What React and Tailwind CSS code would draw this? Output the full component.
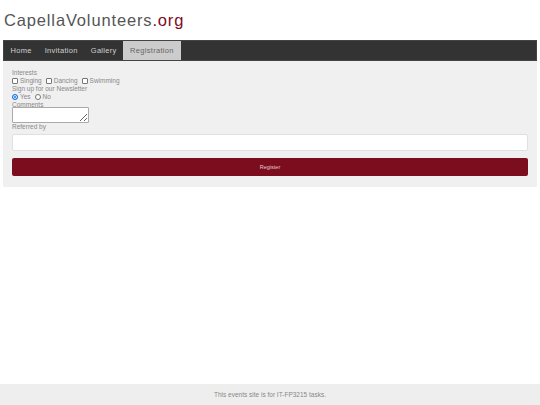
import React from "react";

function Box() {
  return <span className="inline-block w-[6px] h-[6px] border border-[#767676] rounded-[1px] bg-white" />;
}
function Radio({ on }) {
  return on ? (
    <span className="inline-block w-[6px] h-[6px] rounded-full bg-[#1a73e8] border-[1.5px] border-[#1a73e8] shadow-[inset_0_0_0_1px_white]" />
  ) : (
    <span className="inline-block w-[6px] h-[6px] rounded-full border border-[#767676] bg-white" />
  );
}

export default function App() {
  const font = { fontFamily: '"Liberation Sans", Arial, sans-serif' };
  return (
    <div className="w-[540px] h-[405px] bg-white flex flex-col relative" style={font}>
      <div className="px-[3px] pt-[9px]">
        <h1 className="text-[16.5px] leading-[22px] tracking-[0.85px] text-[#555] pl-[1px] font-normal">
          CapellaVolunteers<span className="text-[#7b0d1e]">.org</span>
        </h1>
        <nav className="mt-[9px] h-[21px] bg-[#333] flex items-stretch text-[7.5px] tracking-[0.3px] text-[#d0d0d0] border border-[#444]">
          <a className="px-[6.5px] flex items-center">Home</a>
          <a className="px-[6.5px] flex items-center">Invitation</a>
          <a className="px-[6.5px] flex items-center">Gallery</a>
          <a className="px-[7px] flex items-center bg-[#cccccc] text-[#666]">Registration</a>
        </nav>
        <div className="bg-[#f0f0f0] px-[9px] pt-[8px] pb-[11px] text-[6.5px] text-[#888] leading-[8px]">
          <div>Interests</div>
          <div className="flex items-center gap-[2px]">
            <Box />
            <span className="mr-[2px]">Singing</span>
            <Box />
            <span className="mr-[2px]">Dancing</span>
            <Box />
            <span>Swimming</span>
          </div>
          <div>Sign up for our Newsletter</div>
          <div className="flex items-center gap-[2px]">
            <Radio on />
            <span className="mr-[2px]">Yes</span>
            <Radio />
            <span>No</span>
          </div>
          <div className="leading-[7px]">Comments</div>
          <textarea className="block -mt-[1px] w-[77px] h-[16px] bg-white border border-[#aaa] rounded-[1px] resize-y"></textarea>
          <div className="mt-[0px]">Referred by</div>
          <input type="text" className="block mt-[3px] w-full h-[17px] bg-white border border-[#e0e0e0] rounded-[2px]" />
          <button className="block mt-[7px] w-full h-[18px] bg-[#7b0d1e] text-[#e8c8cc] text-[5.5px] rounded-[2px]">Register</button>
        </div>
      </div>
      <div className="flex-1" />
      <footer className="h-[21px] bg-[#eeeeee] flex items-center justify-center text-[6.5px] text-[#888]">
        This events site is for IT-FP3215 tasks.
      </footer>
    </div>
  );
}
